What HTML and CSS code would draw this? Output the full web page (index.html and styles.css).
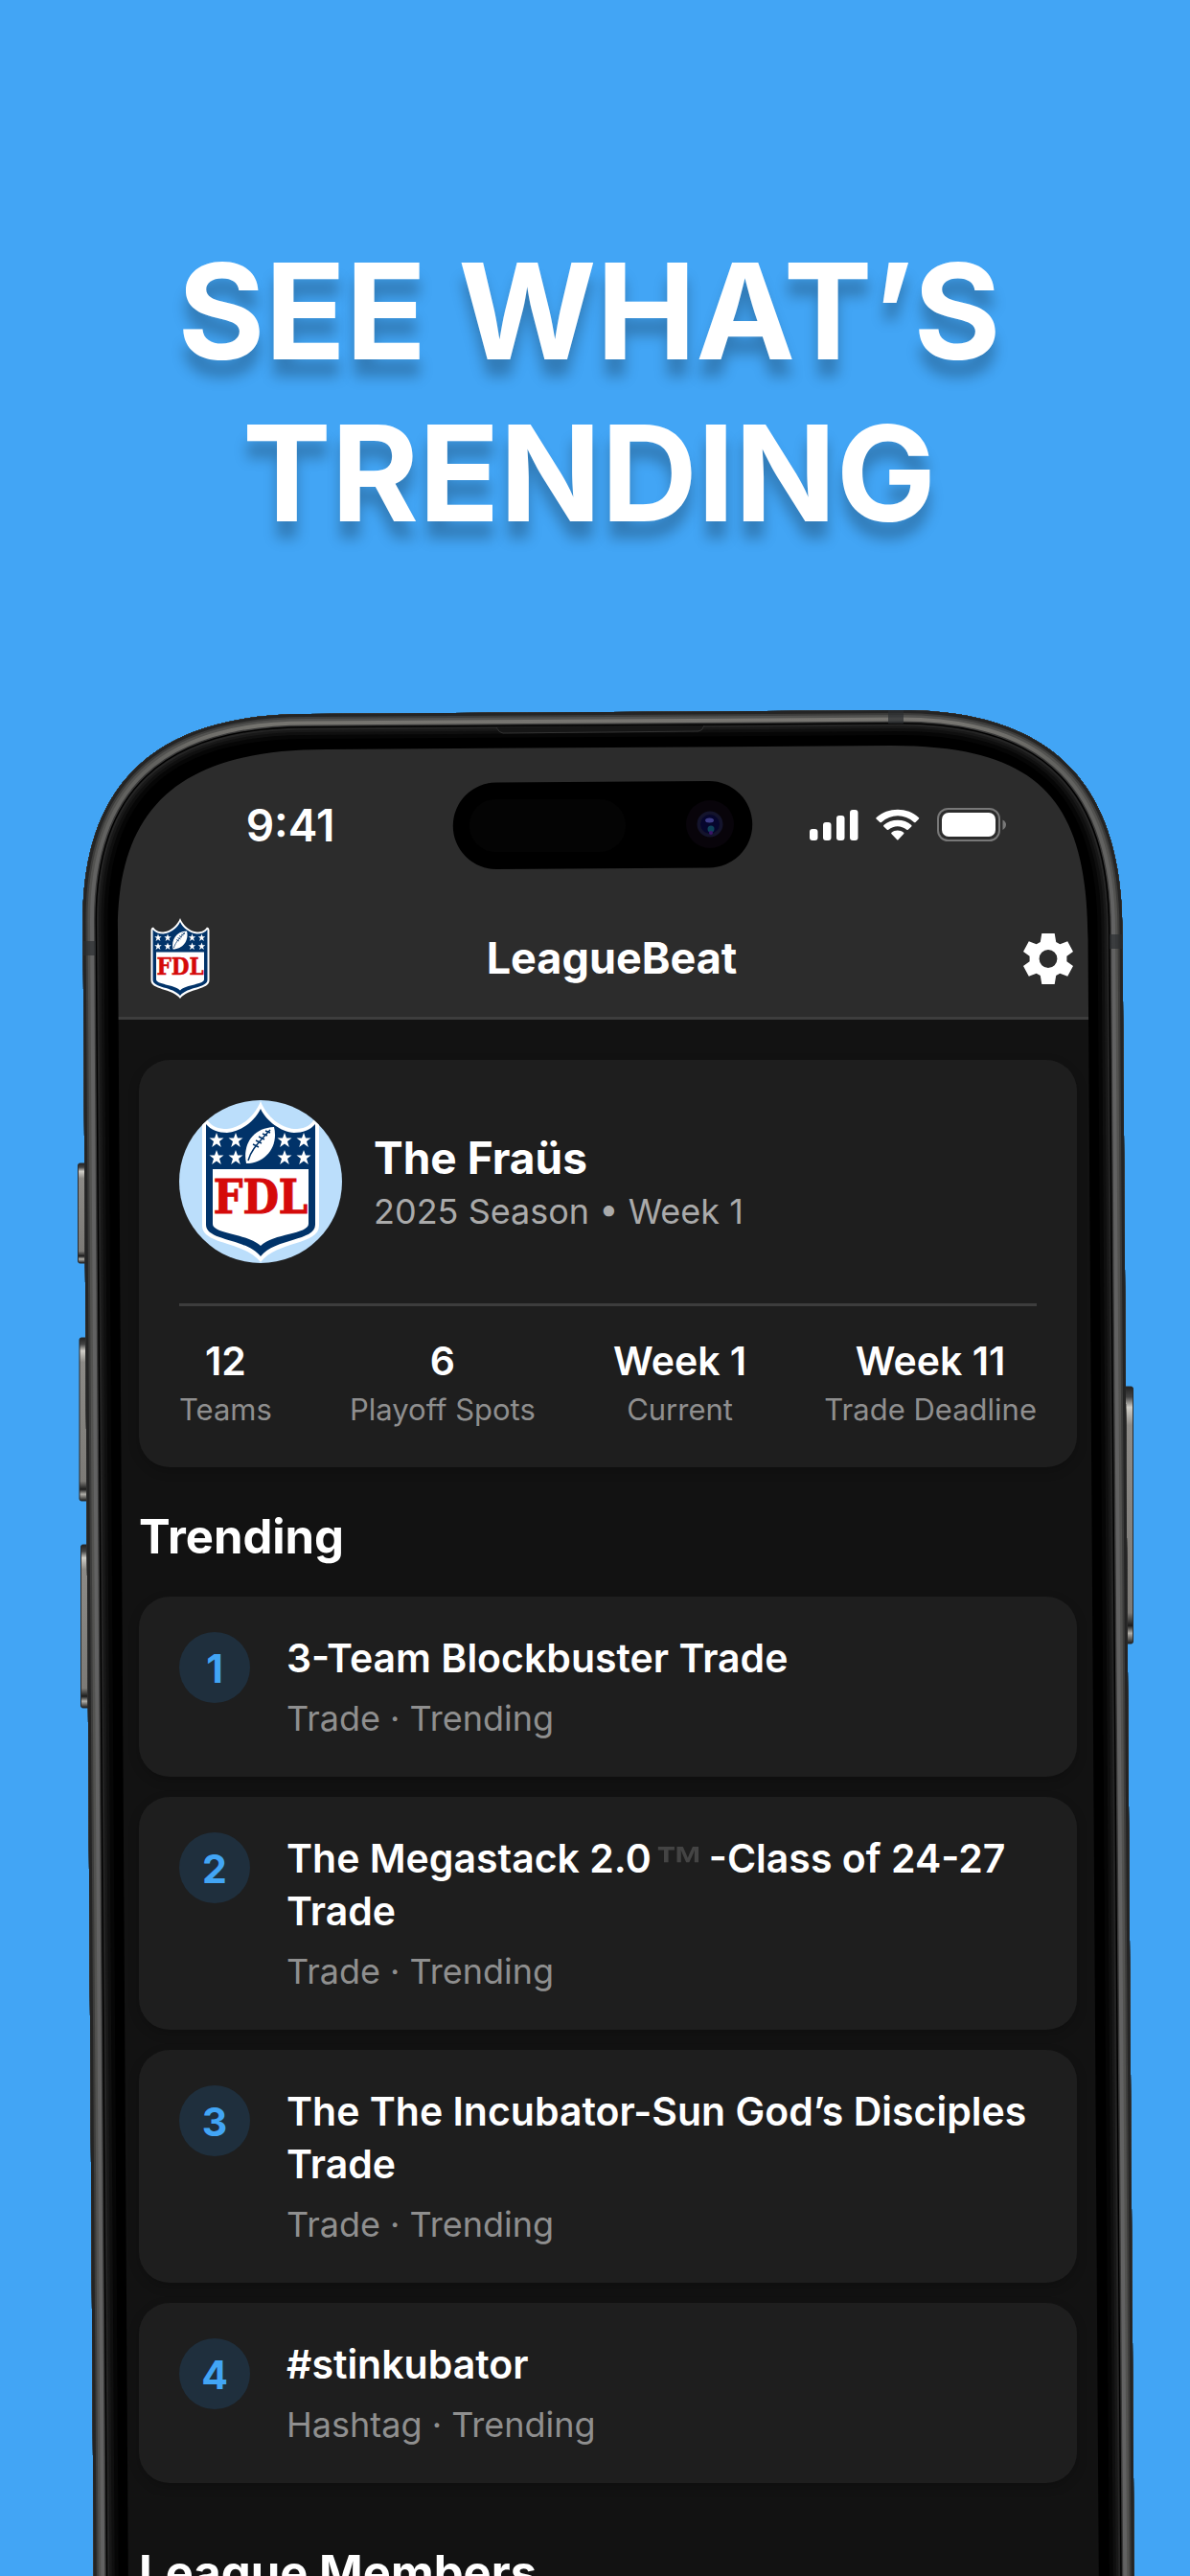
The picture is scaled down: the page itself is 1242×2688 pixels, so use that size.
FILE: index.html
```html
<!DOCTYPE html>
<html lang="en">
<head>
  <meta charset="UTF-8">
  <meta name="viewport" content="width=device-width, initial-scale=1.0">
  <title>LeagueBeat</title>
  <link rel="stylesheet" href="styles.css">
</head>
<body>
  <!-- Shared league logo -->
  <svg class="sprite" aria-hidden="true">
    <symbol id="league-logo" viewBox="0 0 122 168">
      <path fill="#fff" d="M61 0C55 16 40 28 26 29C17 29 10 27 5 19Q0 20 0 25V130C0 150 44 146 61 168C78 146 122 150 122 130V25Q122 20 117 19C112 27 105 29 96 29C82 28 67 16 61 0Z"/>
      <path fill="#013369" d="M61 8C55 21 40 32 26 33C17 33 9 30 4 24V129C4 146 46 143 61 162C76 143 118 146 118 129V24C113 30 105 33 96 33C82 32 67 21 61 8Z"/>
      <path fill="#fff" d="M11 71H111V128C111 139 74 138 61 151C48 138 11 139 11 128Z"/>
      <g fill="#fff">
        <path id="star" d="M15 33L17 38.600H22.500L18 42L19.800 48L15 44.400L10.200 48L12 42L7.500 38.600H13Z"/>
        <use href="#star" x="20"/>
        <use href="#star" x="71"/>
        <use href="#star" x="91"/>
        <use href="#star" y="18"/>
        <use href="#star" x="20" y="18"/>
        <use href="#star" x="71" y="18"/>
        <use href="#star" x="91" y="18"/>
        <path d="M46 65C42 46 52 28 75 27C80 47 66 65 46 65Z"/>
      </g>
      <path fill="none" stroke="#013369" stroke-width="1.500" d="M48 62C50 54 54 48 71 30M53 45L59 48M56 41L62 44M59 37L65 40M63 34L68 36M66 31L71 33"/>
      <text class="logo-text" x="61" y="117" text-anchor="middle">FDL</text>
    </symbol>
  </svg>

  <main class="stage">
    <h1>SEE WHAT’S<br>TRENDING</h1>

    <div class="phone">
      <div class="screen">
        <header class="top">
          <div class="status-bar">
            <span class="time">9:41</span>
            <svg class="island" viewBox="0 0 314 92" aria-hidden="true">
              <path d="M46 1.500L268 0A45 45 0 0 1 268 90.500L46 92A45 45 0 0 1 46 1.500Z"/>
              <rect x="18" y="19" width="163" height="55" rx="27" fill="#040404"/>
              <circle cx="269" cy="45" r="25" fill="#08040a"/>
              <circle cx="269" cy="45" r="13.500" fill="#14142c"/>
              <circle cx="269" cy="45" r="10" fill="#06062c"/>
              <ellipse cx="268.500" cy="41" rx="4.500" ry="2.500" fill="#3c3c86"/>
              <circle cx="270" cy="50" r="3.500" fill="#0d4258"/>
              <circle cx="270" cy="54" r="2" fill="#3b1468"/>
            </svg>
            <div class="status-icons" aria-hidden="true">
              <svg width="51" height="34" viewBox="0 0 51 34" fill="#fff">
                <rect x="0" y="21" width="8.500" height="12" rx="3"/>
                <rect x="14" y="14" width="8.500" height="19" rx="3"/>
                <rect x="28" y="7" width="8.500" height="26" rx="3"/>
                <rect x="42" y="1" width="8.500" height="32" rx="3"/>
              </svg>
              <svg width="46" height="34" viewBox="0 0 46 34" fill="#fff">
                <path d="M0.500 10.500Q0 9.700 0.500 9.200C13 -2 33 -2 45 9.200Q45.500 9.700 45 10.500L41.500 14Q40.800 14.500 40 14C30 5 16 5 6 14Q5 14.500 4.300 14Z"/>
                <path d="M8.300 18.500Q7.800 17.800 8.300 17C16 10 30 10 37.300 17Q37.800 17.800 37.300 18.500L33.800 21.800Q33 22.300 32.300 21.800C26.500 17 19 17 13.300 21.800Q12.500 22.300 11.800 21.800Z"/>
                <path d="M16.300 26Q15.800 25.300 16.500 24.700C20 21.700 25.500 21.700 29.200 24.700Q29.800 25.300 29.300 26L23.700 32Q22.800 33 22 32Z"/>
              </svg>
              <svg width="72" height="36" viewBox="0 0 72 36">
                <rect x="1" y="1" width="64" height="33" rx="10.500" fill="none" stroke="#787878" stroke-width="2"/>
                <rect x="5" y="5" width="56" height="25" rx="7" fill="#fff"/>
                <path d="M68.500 12.500Q72 14.500 72 17.500T68.500 23Z" fill="#787878"/>
              </svg>
            </div>
          </div>
          <div class="app-bar">
            <svg class="app-logo" role="img" aria-label="League logo"><use href="#league-logo"/></svg>
            <span class="app-title">LeagueBeat</span>
            <button class="settings" type="button" aria-label="Settings">
              <svg width="52" height="53" viewBox="-26 -26.500 52 53">
                <path fill="#fff" fill-rule="evenodd" d="M-6.700 -26.500H6.700L8.200 -17.400L12.300 -15.200L20.200 -18.300L26 -7.600L19.400 -2.800V2.800L26 7.600L20.200 18.300L12.300 15.200L8.200 17.400L6.700 26.500H-6.700L-8.200 17.400L-12.300 15.200L-20.200 18.300L-26 7.600L-19.400 2.800V-2.800L-26 -7.600L-20.200 -18.300L-12.300 -15.200L-8.200 -17.400ZM0 -9.400A9.400 9.400 0 0 0 0 9.400A9.400 9.400 0 0 0 0 -9.400Z"/>
              </svg>
            </button>
          </div>
        </header>

        <div class="content">
          <section class="card league-card">
            <div class="league-info">
              <div class="avatar">
                <svg role="img" aria-label="The Fraüs logo"><use href="#league-logo"/></svg>
              </div>
              <div class="league-text">
                <h2 class="league-name">The Fraüs</h2>
                <p class="league-season">2025 Season • Week 1</p>
              </div>
            </div>
            <div class="stats">
              <div class="stat"><strong>12</strong><span>Teams</span></div>
              <div class="stat"><strong>6</strong><span>Playoff Spots</span></div>
              <div class="stat"><strong>Week 1</strong><span>Current</span></div>
              <div class="stat"><strong>Week 11</strong><span>Trade Deadline</span></div>
            </div>
          </section>

          <h2 class="section-title">Trending</h2>
          <ol class="trending">
            <li class="card trend">
              <span class="rank">1</span>
              <div class="trend-text">
                <h3>3-Team Blockbuster Trade</h3>
                <p>Trade · Trending</p>
              </div>
            </li>
            <li class="card trend">
              <span class="rank">2</span>
              <div class="trend-text">
                <h3>The Megastack 2.0<span class="tm">™</span>-Class of 24-27 Trade</h3>
                <p>Trade · Trending</p>
              </div>
            </li>
            <li class="card trend">
              <span class="rank">3</span>
              <div class="trend-text">
                <h3>The The Incubator-Sun God’s Disciples Trade</h3>
                <p>Trade · Trending</p>
              </div>
            </li>
            <li class="card trend">
              <span class="rank">4</span>
              <div class="trend-text">
                <h3>#stinkubator</h3>
                <p>Hashtag · Trending</p>
              </div>
            </li>
          </ol>

          <h2 class="section-title">League Members</h2>
        </div>
      </div>

      <!-- Phone body, lies over the edges of the screen -->
      <svg class="frame" viewBox="0 736 1242 1952" preserveAspectRatio="none" aria-hidden="true">
        <defs>
          <path id="outer" d="M98 2720L86.500 960C86.500 820 160 745 320 745L940 741C1100 741 1171 820 1171.500 970L1184 2720Z"/>
          <clipPath id="body-clip">
            <path clip-rule="evenodd" d="M98 2720L86.500 960C86.500 820 160 745 320 745L940 741C1100 741 1171 820 1171.500 970L1184 2720ZM134 2720L123 970C123 845 185 782 340 782L930 778C1085 778 1135 835 1135.500 980L1147 2720Z"/>
          </clipPath>
          <linearGradient id="metal" gradientUnits="userSpaceOnUse" x1="0" y1="741" x2="0" y2="960">
            <stop offset="0" stop-color="#7c7a75"/>
            <stop offset="0.250" stop-color="#62625f"/>
            <stop offset="1" stop-color="#626262"/>
          </linearGradient>
          <linearGradient id="key" x1="0" y1="0" x2="0" y2="1">
            <stop offset="0" stop-color="#222"/>
            <stop offset="0.040" stop-color="#444"/>
            <stop offset="0.080" stop-color="#d0cec8"/>
            <stop offset="0.150" stop-color="#8c8a86"/>
            <stop offset="0.880" stop-color="#7c7a76"/>
            <stop offset="0.930" stop-color="#1c1c1c"/>
            <stop offset="0.960" stop-color="#b0aea8"/>
            <stop offset="1" stop-color="#1c1c1c"/>
          </linearGradient>
        </defs>
        <g fill="url(#key)" stroke="#2a2a2a" stroke-width="1">
          <rect x="81.500" y="1214" width="10" height="104" rx="2"/>
          <rect x="83" y="1396" width="10" height="170" rx="2"/>
          <rect x="84.500" y="1612" width="10" height="170" rx="2"/>
          <rect x="1172" y="1447" width="10.500" height="268" rx="2"/>
        </g>
        <g clip-path="url(#body-clip)" fill="none">
          <use href="#outer" stroke="#000" stroke-width="130"/>
          <use href="#outer" stroke="#060606" stroke-width="52"/>
          <use href="#outer" stroke="#0f0f0f" stroke-width="44"/>
          <use href="#outer" stroke="#181818" stroke-width="38"/>
          <use href="#outer" stroke="#242424" stroke-width="33"/>
          <use href="#outer" stroke="#000" stroke-width="29"/>
          <use href="#outer" stroke="#383838" stroke-width="26"/>
          <use href="#outer" stroke="url(#metal)" stroke-width="23"/>
          <use href="#outer" stroke="#525250" stroke-width="15"/>
          <use href="#outer" stroke="#3c3c3b" stroke-width="10"/>
          <use href="#outer" stroke="#242424" stroke-width="6"/>
          <g fill="#2b2e30" fill-opacity="0.700">
            <path d="M86 982H100V997H86Z"/>
            <path d="M927 741H943V755H927Z"/>
            <path d="M1158 975H1172V990H1158Z"/>
          </g>
          <path fill="#161616" stroke="#333" d="M518 759Q521 765 525 765L729 763Q733 763 735 757"/>
        </g>
      </svg>
    </div>
  </main>
</body>
</html>
```
FILE: styles.css
```css
* {
  box-sizing: border-box;
}
body {
  margin: 0;
  background-color: #42a5f5;
  color: #fff;
  font-family: Inter, "Liberation Sans", sans-serif;
}
h1, h2, h3, p, ol {
  margin: 0;
  padding: 0;
}
.sprite {
  display: none;
}
.logo-text {
  font-family: "DejaVu Serif Condensed", "DejaVu Serif", serif;
  font-size: 48px;
  font-weight: bold;
  fill: #d50a0a;
  stroke: #d50a0a;
  stroke-width: 1px;
}
.stage {
  display: flex;
  flex-direction: column;
  height: 100vh;
  overflow: hidden;
}
h1 {
  padding: 240px 12px 158px 0;
  font-size: 139px;
  line-height: 169px;
  font-weight: 700;
  text-align: center;
  text-shadow: 0 18px 14px rgba(0, 0, 0, 0.25);
}

/* Phone */
.phone {
  position: relative;
  flex: 1;
  min-height: 0;
  padding: 20px 82px 0 110px;
}
.frame {
  position: absolute;
  top: 0;
  left: 0;
  width: 100%;
  height: 100%;
  pointer-events: none;
}
.screen {
  height: 100%;
  overflow: hidden;
  background-color: #121212;
  border-radius: 150px 150px 0 0;
}
.top {
  background-color: #2c2c2c;
  border-bottom: 3px solid #3d3d3d;
}
.status-bar {
  display: grid;
  grid-template-columns: 1fr 314px 1fr;
  align-items: center;
  justify-items: center;
  padding: 59px 24px 0 12px;
}
.time {
  padding-left: 12px;
  font-size: 46px;
  line-height: 52px;
  font-weight: 600;
}
.island {
  width: 314px;
  height: 92px;
}
.status-icons {
  display: flex;
  align-items: center;
  gap: 18px;
  padding-right: 28px;
}
.app-bar {
  display: grid;
  grid-template-columns: 1fr auto 1fr;
  align-items: center;
  padding: 51px 40px 19px 47px;
}
.app-logo {
  width: 62px;
  height: 84px;
}
.app-title {
  font-size: 45px;
  line-height: 56px;
  font-weight: 700;
}
.settings {
  display: flex;
  justify-self: end;
  padding: 0;
  border: none;
  background: none;
  cursor: pointer;
}

/* Content */
.content {
  padding: 42px 36px 0 35px;
}
.card {
  background-color: #1e1e1e;
  border-radius: 32px;
  box-shadow: 0 4px 12px rgba(0, 0, 0, 0.2);
}
.league-card {
  padding: 42px;
}
.league-info {
  display: flex;
  align-items: center;
  gap: 33px;
  padding-bottom: 42px;
  border-bottom: 3px solid #3d3d3d;
}
.avatar {
  display: flex;
  justify-content: center;
  width: 170px;
  height: 170px;
  border-radius: 50%;
  background-color: #bbdefb;
  overflow: hidden;
}
.avatar svg {
  width: 122px;
  height: 170px;
}
.league-text {
  display: flex;
  flex-direction: column;
  gap: 6px;
}
.league-name {
  font-size: 46px;
  line-height: 56px;
  font-weight: 700;
}
.league-season {
  font-size: 36px;
  line-height: 44px;
  color: #aaa;
}
.stats {
  display: flex;
  justify-content: space-between;
  padding-top: 32px;
}
.stat {
  display: flex;
  flex-direction: column;
  align-items: center;
  gap: 8px;
}
.stat strong {
  font-size: 41px;
  line-height: 50px;
  font-weight: 600;
}
.stat span {
  font-size: 31px;
  line-height: 36px;
  color: #8f8f8f;
}
.section-title {
  margin: 43px 0 32px;
  font-size: 49px;
  line-height: 60px;
  font-weight: 700;
}
.trending {
  display: flex;
  flex-direction: column;
  gap: 21px;
  padding-bottom: 21px;
  list-style: none;
}
.trend {
  display: flex;
  gap: 38px;
  padding: 37px 42px;
}
.rank {
  flex-shrink: 0;
  width: 74px;
  height: 74px;
  border-radius: 50%;
  background-color: #1f2f3d;
  color: #42a5f5;
  font-size: 41px;
  line-height: 76px;
  font-weight: 700;
  text-align: center;
}
.trend-text {
  display: flex;
  flex-direction: column;
  gap: 12px;
}
.trend h3 {
  font-size: 41px;
  line-height: 55px;
  font-weight: 600;
}
.trend p {
  font-size: 36px;
  line-height: 47px;
  color: #8f8f8f;
}
.tm {
  padding: 0 4px;
  font-family: "Liberation Sans", sans-serif;
  font-size: 52px;
  font-weight: 700;
  line-height: 0;
  vertical-align: -9px;
  color: #444;
}
```
